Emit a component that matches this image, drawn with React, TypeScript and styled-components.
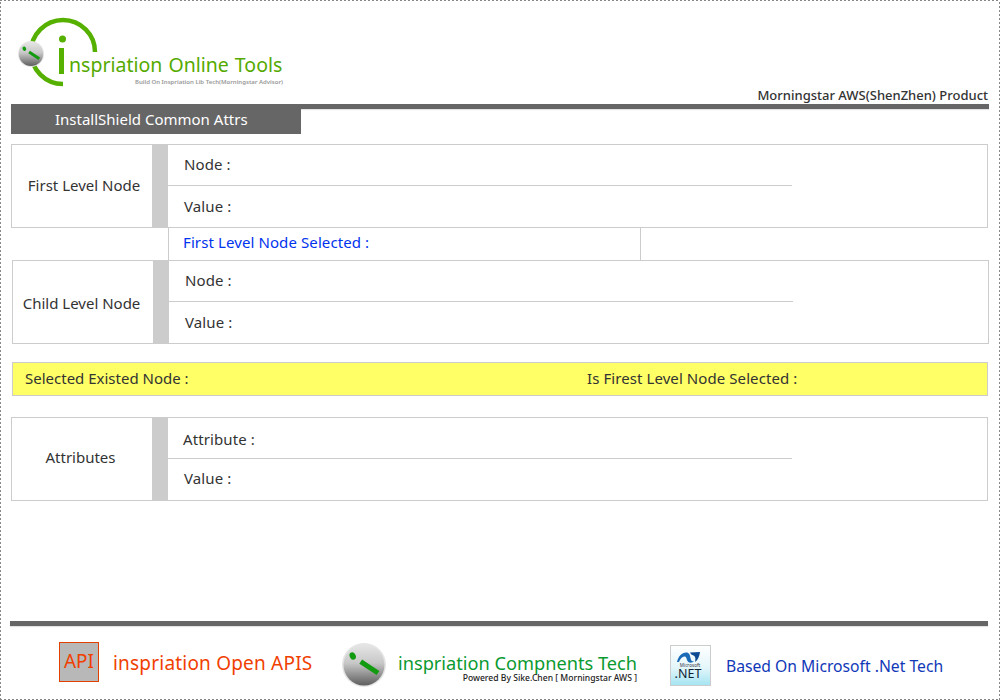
import React from "react";
import styled, { createGlobalStyle } from "styled-components";

const GlobalStyle = createGlobalStyle`
  html, body {
    margin: 0;
    padding: 0;
    background: #fff;
  }
`;

const FONT = `"Noto Sans", "Open Sans", sans-serif`;

const Page = styled.div`
  box-sizing: border-box;
  width: 1000px;
  height: 700px;
  padding: 0 11px;
  overflow: hidden;
  font-family: ${FONT};
  color: #333;
  background:
    repeating-linear-gradient(90deg, #888 0 2px, transparent 2px 4px) 0 0 / 100% 1px no-repeat,
    repeating-linear-gradient(90deg, #888 0 2px, transparent 2px 4px) 0 699px / 100% 1px no-repeat,
    repeating-linear-gradient(0deg, #888 0 2px, transparent 2px 4px) 0 0 / 1px 100% no-repeat,
    repeating-linear-gradient(0deg, #888 0 2px, transparent 2px 4px) 999px 0 / 1px 100% no-repeat,
    #fff;
`;

const Header = styled.header`
  display: flex;
  justify-content: space-between;
  align-items: flex-end;
  height: 104px;
`;

const Logo = styled.div`
  display: flex;
  align-self: flex-start;
  padding: 19px 0 0 6px;
`;

const LogoMark = styled.svg`
  display: block;
  overflow: visible;
  flex: none;
`;

const LogoText = styled.div`
  margin-top: 34px;
  width: 214px;
`;

const Wordmark = styled.div`
  font-size: 19.5px;
  line-height: 24px;
  word-spacing: 1px;
  color: #55aa00;
  white-space: nowrap;
`;

const Tagline = styled.div`
  margin-top: 1px;
  font-size: 6px;
  line-height: 8px;
  text-align: right;
  font-weight: 600;
  color: #999;
  white-space: nowrap;
`;

const Product = styled.div`
  margin-bottom: 1px;
  padding-right: 1px;
  font-size: 13px;
  line-height: 16px;
  font-weight: 500;
  white-space: nowrap;
`;

const Rule = styled.div<{ $shift?: number }>`
  height: 5px;
  width: 978px;
  margin-left: ${(p) => p.$shift ?? 0}px;
  background: #666;
  box-shadow: 0 1px 1px #e4e4e4;
`;

const Tab = styled.div`
  box-sizing: border-box;
  width: 290px;
  height: 25px;
  padding-left: 44px;
  background: #666;
  color: #fff;
  font-size: 15px;
  line-height: 20px;
`;

const Panel = styled.section<{ $top?: number; $shift?: number }>`
  box-sizing: border-box;
  display: grid;
  grid-template-columns: 140px 16px 624px;
  width: 977px;
  height: 84px;
  margin-top: ${(p) => p.$top ?? 0}px;
  margin-left: ${(p) => p.$shift ?? 0}px;
  border: 1px solid #ccc;
`;

const PanelLabel = styled.div<{ $nudge?: number; $raise?: number }>`
  display: flex;
  align-items: center;
  justify-content: center;
  padding-left: ${(p) => Math.max(p.$nudge ?? 0, 0)}px;
  padding-right: ${(p) => Math.max(-(p.$nudge ?? 0), 0)}px;
  padding-top: ${(p) => Math.max(-(p.$raise ?? 0), 0)}px;
  padding-bottom: ${(p) => Math.max(p.$raise ?? 0, 0)}px;
  font-size: 15px;
`;

const PanelBar = styled.div`
  background: #ccc;
`;

const Fields = styled.div`
  display: grid;
  grid-template-rows: 40px 42px;
`;

const Field = styled.div<{ $indent?: number; $raise?: number }>`
  display: flex;
  align-items: center;
  padding-left: ${(p) => p.$indent ?? 16}px;
  padding-top: ${(p) => Math.max(-(p.$raise ?? 2), 0)}px;
  padding-bottom: ${(p) => Math.max(p.$raise ?? 2, 0)}px;
  font-size: 15px;
  letter-spacing: 0.1px;

  & + & {
    border-top: 1px solid #ccc;
  }
`;

const Between = styled.div`
  display: flex;
  height: 32px;
  padding-left: 157px;
`;

const BetweenCell = styled.div`
  box-sizing: border-box;
  width: 473px;
  padding-left: 14px;
  border-left: 1px solid #ccc;
  border-right: 1px solid #ccc;
  color: #0033ee;
  font-size: 15px;
  line-height: 28px;
  letter-spacing: 0.1px;
`;

const Selected = styled.section`
  box-sizing: border-box;
  display: flex;
  align-items: center;
  width: 976px;
  height: 34px;
  margin: 18px 0 21px 1px;
  padding: 0 0 3px 12px;
  border: 1px solid #ccc;
  background: #ffff66;
  font-size: 15px;
  letter-spacing: 0.08px;
`;

const SelectedCell = styled.div`
  width: 562px;
  letter-spacing: 0;
`;

const Footer = styled.footer`
  margin-top: 120px;
`;

const FooterRow = styled.div`
  display: flex;
  align-items: flex-start;
  padding: 16px 0 0 48px;
`;

const ApiBox = styled.div`
  box-sizing: border-box;
  width: 40px;
  height: 40px;
  margin-right: 14px;
  border: 1px solid #e04000;
  background: #b8b8b8;
  color: #f04000;
  font-size: 19px;
  line-height: 37px;
  text-align: center;
  flex: none;
`;

const FooterTitle = styled.div<{ $color: string; $size: number; $top: number; $space?: number }>`
  margin-top: ${(p) => p.$top}px;
  color: ${(p) => p.$color};
  font-size: ${(p) => p.$size}px;
  line-height: 24px;
  letter-spacing: ${(p) => p.$space ?? 0}px;
  white-space: nowrap;
`;

const ApiTitle = styled.div`
  width: 229px;
  flex: none;
`;

const BallSlot = styled.div`
  width: 56px;
  margin-top: 1px;
  flex: none;
`;

const TechColumn = styled.div`
  width: 272px;
  flex: none;
`;

const PoweredBy = styled.div`
  width: 239px;
  margin-top: -2px;
  font-size: 8.6px;
  line-height: 11px;
  font-weight: 500;
  color: #222;
  text-align: right;
  white-space: nowrap;
`;

const NetIcon = styled.svg`
  display: block;
  flex: none;
  margin: 3px 15px 0 0;
`;

const Ball = ({ size, id }: { size: number; id: string }) => (
  <svg width={size} height={size} viewBox="0 0 44 44" style={{ display: "block", overflow: "visible" }}>
    <defs>
      <linearGradient id={id} x1="0" y1="0" x2="0" y2="1">
        <stop offset="0" stopColor="#e6e6e6" />
        <stop offset="0.45" stopColor="#c8c8c8" />
        <stop offset="1" stopColor="#5e5e5e" />
      </linearGradient>
    </defs>
    <circle cx="22" cy="22" r="22" fill="#e4e4e4" />
    <circle cx="22" cy="22" r="20.5" fill={`url(#${id})`} />
    <ellipse cx="10.7" cy="13" rx="3" ry="3.8" fill="#129a10" transform="rotate(-25 10.7 13)" />
    <path d="M18.7 18.7 L36 30" stroke="#129a10" strokeWidth="5" fill="none" />
  </svg>
);

const App = () => {
  return (
    <Page>
      <GlobalStyle />
      <Header>
        <Logo>
          <LogoMark width="52" height="67" viewBox="0 0 52 67">
            {/* big arc, runs behind the ball */}
            <path d="M78 33 A32 32 0 1 0 46 65" stroke="#55b000" strokeWidth="4.5" fill="none" />
            <g transform="translate(1 22)">
              <Ball size={26} id="ballLogo" />
            </g>
            <circle cx="45.5" cy="20" r="3.5" fill="#55b000" />
            <rect x="42" y="29" width="5" height="26" fill="#55b000" />
          </LogoMark>
          <LogoText>
            <Wordmark>nspriation Online Tools</Wordmark>
            <Tagline>Build On Inspriation Lib Tech(Morningstar Advisor)</Tagline>
          </LogoText>
        </Logo>
        <Product>Morningstar AWS(ShenZhen) Product</Product>
      </Header>
      <Rule />
      <Tab>InstallShield Common Attrs</Tab>

      <Panel $top={10}>
        <PanelLabel $nudge={4} $raise={2}>First Level Node</PanelLabel>
        <PanelBar />
        <Fields>
          <Field>Node :</Field>
          <Field>Value :</Field>
        </Fields>
      </Panel>
      <Between>
        <BetweenCell>First Level Node Selected :</BetweenCell>
      </Between>
      <Panel $shift={1}>
        <PanelLabel $nudge={-3} $raise={-2}>Child Level Node</PanelLabel>
        <PanelBar />
        <Fields>
          <Field>Node :</Field>
          <Field>Value :</Field>
        </Fields>
      </Panel>

      <Selected>
        <SelectedCell>Selected Existed Node :</SelectedCell>
        <div>Is Firest Level Node Selected :</div>
      </Selected>

      <Panel>
        <PanelLabel $nudge={-3} $raise={4}>Attributes</PanelLabel>
        <PanelBar />
        <Fields>
          <Field $indent={15} $raise={-1}>Attribute :</Field>
          <Field $raise={4}>Value :</Field>
        </Fields>
      </Panel>

      <Footer>
        <Rule $shift={-1} />
        <FooterRow>
          <ApiBox>API</ApiBox>
          <ApiTitle>
            <FooterTitle $color="#f04000" $size={19} $top={9} $space={0.2}>
              inspriation Open APIS
            </FooterTitle>
          </ApiTitle>
          <BallSlot>
            <Ball size={44} id="ballFooter" />
          </BallSlot>
          <TechColumn>
            <FooterTitle $color="#0a9a30" $size={18.2} $top={9}>
              inspriation Compnents Tech
            </FooterTitle>
            <PoweredBy>Powered By Sike.Chen [ Morningstar AWS ]</PoweredBy>
          </TechColumn>
          <NetIcon width="41" height="41" viewBox="0 0 41 41">
            <defs>
              <linearGradient id="netBg" x1="0" y1="0" x2="0" y2="1">
                <stop offset="0" stopColor="#ffffff" />
                <stop offset="0.55" stopColor="#e4f6fa" />
                <stop offset="1" stopColor="#a4e4f2" />
              </linearGradient>
            </defs>
            <rect x="0.5" y="0.5" width="40" height="40" fill="url(#netBg)" stroke="#ccc" />
            <g transform="translate(-1 -1)">
              <path d="M8 18 C9.5 12 13 8.5 17 8.5 C20.5 8.5 21 11 21.5 14 C22 16.5 23 18 25 17 C23.5 19 20 19.5 18.5 17 C17.5 15 17.5 12.5 15.5 12.5 C13 12.5 11 15 10 18 Z" fill="#1a6ab8" />
              <path d="M21 8.5 L31 8 C30.5 12 29 16 26 18 C27 14 26 12 24.5 11.5 C23 11 21.5 10 21 8.5 Z" fill="#0e4a92" />
            </g>
            <text x="20" y="21.5" fontSize="4.6" fontFamily={FONT} fill="#334" textAnchor="middle">
              Microsoft
            </text>
            <text x="18" y="32.5" fontSize="12.5" fontFamily={FONT} fill="#123" textAnchor="middle">
              .NET
            </text>
          </NetIcon>
          <FooterTitle $color="#1038b8" $size={15.7} $top={12}>
            Based On Microsoft .Net Tech
          </FooterTitle>
        </FooterRow>
      </Footer>
    </Page>
  );
};

export default App;
